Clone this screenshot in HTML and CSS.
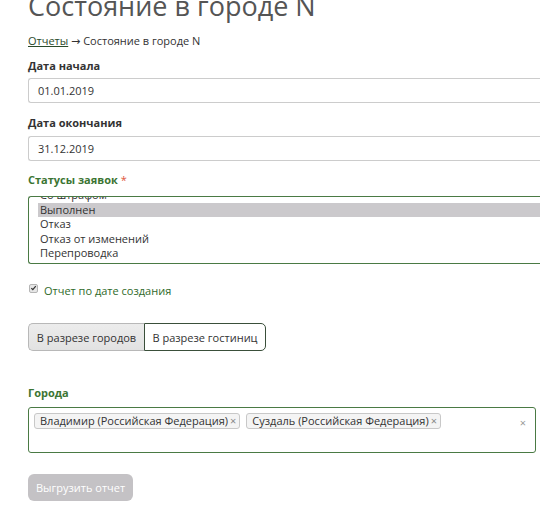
FILE: index.html
```html
<!DOCTYPE html>
<html lang="ru">
<head>
<meta charset="utf-8">
<title>Состояние в городе N</title>
<link rel="stylesheet" href="styles.css">
</head>
<body>
<div class="page">
  <h1 class="title">Состояние в городе N</h1>
  <div class="crumbs"><a href="#" class="crumb-link">Отчеты</a> → Состояние в городе N</div>

  <div class="field">
    <label class="label">Дата начала</label>
    <div class="input">01.01.2019</div>
  </div>
  <div class="field">
    <label class="label">Дата окончания</label>
    <div class="input">31.12.2019</div>
  </div>

  <div class="field field-status">
    <label class="label label-green">Статусы заявок <span class="req">*</span></label>
    <div class="listbox">
      <div class="listbox-inner">
        <div class="opt">Со штрафом</div>
        <div class="opt opt-selected">Выполнен</div>
        <div class="opt">Отказ</div>
        <div class="opt">Отказ от изменений</div>
        <div class="opt">Перепроводка</div>
      </div>
    </div>
  </div>

  <div class="check-row">
    <span class="checkbox"><svg viewBox="0 0 8 8" width="8" height="8"><path d="M1.5 4.2 L3.2 5.8 L6.6 1.8" fill="none" stroke="#333" stroke-width="1.4"/></svg></span>
    <span class="check-label">Отчет по дате создания</span>
  </div>

  <div class="seg">
    <button class="seg-btn seg-active">В разрезе городов</button>
    <button class="seg-btn seg-plain">В разрезе гостиниц</button>
  </div>

  <div class="field field-cities">
    <label class="label label-green">Города</label>
    <div class="tagbox">
      <div class="tags">
        <span class="tag">Владимир (Российская Федерация)<span class="tag-x">×</span></span>
        <span class="tag">Суздаль (Российская Федерация)<span class="tag-x">×</span></span>
      </div>
      <span class="clear-x">×</span>
    </div>
  </div>

  <button class="submit">Выгрузить отчет</button>
</div>
</body>
</html>
```

FILE: styles.css
```css
html, body {
  margin: 0;
  padding: 0;
  background: #fff;
  overflow: hidden;
}
body {
  font-family: "Open Sans", "DejaVu Sans", sans-serif;
  font-size: 11px;
  color: #333;
}
.page {
  padding-left: 28px;
  width: 512px;
  overflow: hidden;
}
.title {
  margin: -9px 0 0 0;
  font-size: 27px;
  line-height: 30px;
  font-weight: 400;
  color: #555;
}
.crumbs {
  margin-top: 12px;
  line-height: 15px;
  color: #333;
}
.crumb-link {
  color: #2b4a2b;
  text-decoration: underline;
}
.field {
  display: flex;
  flex-direction: column;
}
.label {
  display: block;
  font-weight: 700;
  line-height: 15px;
  margin-top: 10px;
  margin-bottom: 5px;
  color: #333;
}
.field + .field .label { margin-top: 12px; margin-bottom: 6px; }
.label-green { color: #3c7533; }
.req { color: #e0553b; font-weight: 400; }
.input {
  box-sizing: border-box;
  width: 520px;
  height: 25px;
  border: 1px solid #ccc;
  border-right: none;
  border-radius: 3px 0 0 3px;
  padding: 0 9px;
  line-height: 23px;
  color: #333;
}
.field.field-status .label { margin-top: 11px; margin-bottom: 9px; }
.listbox {
  box-sizing: border-box;
  width: 520px;
  height: 68px;
  border: 1px solid #4a7a44;
  border-right: none;
  border-radius: 3px 0 0 3px;
  overflow: hidden;
  padding: 0 0 0 9px;
}
.listbox-inner {
  margin-top: -9px;
}
.opt {
  height: 14.5px;
  line-height: 14.5px;
  padding-left: 2px;
  white-space: nowrap;
}
.opt-selected {
  background: #cbc9cc;
}
.check-row {
  display: flex;
  align-items: center;
  margin-top: 19px;
  height: 15px;
}
.checkbox {
  box-sizing: border-box;
  width: 9px;
  height: 9px;
  border: 1px solid #b5b5b5;
  border-radius: 2px;
  background: #e6e6e6;
  display: flex;
  align-items: center;
  justify-content: center;
  margin-left: 1px;
  margin-top: -5px;
}
.checkbox svg { display: block; }
.check-label {
  margin-left: 6px;
  color: #2f6a2a;
}
.seg {
  display: flex;
  margin-top: 25px;
}
.seg-btn {
  box-sizing: border-box;
  height: 28px;
  font-family: "Open Sans", "DejaVu Sans", sans-serif;
  font-size: 11px;
  color: #333;
  margin: 0;
  padding: 0 7px;
  cursor: pointer;
}
.seg-active {
  width: 116px;
  background: linear-gradient(#ececec, #e2e2e2);
  border: 1px solid #b8b8b8;
  border-right: none;
  border-radius: 5px 0 0 5px;
}
.seg-plain {
  width: 122px;
  background: #fff;
  border: 1px solid #3a4f3a;
  border-radius: 0 5px 5px 0;
}
.field.field-cities .label { margin-top: 34px; margin-bottom: 7px; }
.tagbox {
  box-sizing: border-box;
  width: 508px;
  height: 46px;
  border: 1px solid #4a7a44;
  border-radius: 3px;
  display: flex;
  justify-content: space-between;
  align-items: flex-start;
  padding: 5px 9px 0 5px;
}
.tags {
  display: flex;
  gap: 6px;
}
.tag {
  box-sizing: border-box;
  height: 16px;
  line-height: 14px;
  border: 1px solid #c8c8c8;
  border-radius: 3px;
  background: #f4f4f4;
  padding: 0 3px 0 5px;
  white-space: nowrap;
  color: #333;
}
.tag-x {
  color: #888;
  margin-left: 2px;
}
.clear-x {
  color: #999;
  line-height: 16px;
  margin-top: 2px;
}
.submit {
  display: block;
  margin-top: 21px;
  box-sizing: border-box;
  width: 105px;
  height: 27px;
  border: none;
  border-radius: 6px;
  background: #c4c2c5;
  color: #fff;
  font-family: "Open Sans", "DejaVu Sans", sans-serif;
  font-size: 11px;
  padding: 0;
}
```
